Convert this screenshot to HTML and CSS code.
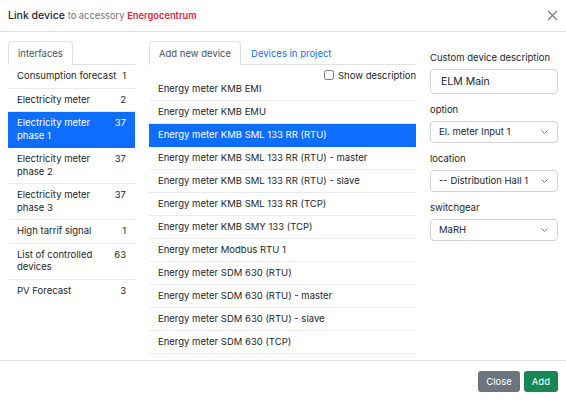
FILE: index.html
```html
<!DOCTYPE html>
<html lang="en">
  <head>
    <meta charset="UTF-8" />
    <meta name="viewport" content="width=device-width, initial-scale=1.0" />
    <title>Link device</title>
    <link rel="stylesheet" href="styles.css">
  </head>
  <body>
    <div class="modal">
      <div class="modal-header">
        <div class="modal-title">
          Link device
          <span class="sub">to accessory</span>
          <span class="accessory">Energocentrum</span>
        </div>
        <button type="button" class="btn-close" aria-label="Close">
          <svg width="11" height="11" viewBox="0 0 11 11">
            <path d="M1 1 L10 10 M10 1 L1 10" stroke="#6c757d" stroke-width="1.1" fill="none" />
          </svg>
        </button>
      </div>

      <div class="modal-body">
        <!-- interfaces -->
        <div class="col">
          <div class="nav-tabs">
            <span class="tab active">interfaces</span>
          </div>
          <ul class="list">
            <li><span>Consumption forecast</span><span class="count">1</span></li>
            <li><span>Electricity meter</span><span class="count">2</span></li>
            <li class="selected"><span>Electricity meter phase 1</span><span class="count">37</span></li>
            <li><span>Electricity meter phase 2</span><span class="count">37</span></li>
            <li><span>Electricity meter phase 3</span><span class="count">37</span></li>
            <li><span>High tarrif signal</span><span class="count">1</span></li>
            <li><span>List of controlled devices</span><span class="count">63</span></li>
            <li class="last"><span>PV Forecast</span><span class="count">3</span></li>
          </ul>
        </div>

        <!-- devices -->
        <div class="col">
          <div class="nav-tabs">
            <span class="tab active">Add new device</span>
            <span class="tab link">Devices in project</span>
          </div>
          <div class="list-options">
            <label class="check"><input type="checkbox" /> Show description</label>
          </div>
          <ul class="list devices">
            <li>Energy meter KMB EMI</li>
            <li>Energy meter KMB EMU</li>
            <li class="selected">Energy meter KMB SML 133 RR (RTU)</li>
            <li>Energy meter KMB SML 133 RR (RTU) - master</li>
            <li>Energy meter KMB SML 133 RR (RTU) - slave</li>
            <li>Energy meter KMB SML 133 RR (TCP)</li>
            <li>Energy meter KMB SMY 133 (TCP)</li>
            <li>Energy meter Modbus RTU 1</li>
            <li>Energy meter SDM 630 (RTU)</li>
            <li>Energy meter SDM 630 (RTU) - master</li>
            <li>Energy meter SDM 630 (RTU) - slave</li>
            <li>Energy meter SDM 630 (TCP)</li>
          </ul>
        </div>

        <!-- settings -->
        <div class="col settings">
          <div class="field">
            <label>Custom device description</label>
            <div class="input">ELM Main</div>
          </div>
          <div class="field">
            <label>option</label>
            <div class="select">El. meter Input 1 <svg width="7" height="4" viewBox="0 0 7 4"><path d="M0.5 0.5 L3.5 3.5 L6.5 0.5" stroke="#777" fill="none" /></svg></div>
          </div>
          <div class="field">
            <label>location</label>
            <div class="select">-- Distribution Hall 1 <svg width="7" height="4" viewBox="0 0 7 4"><path d="M0.5 0.5 L3.5 3.5 L6.5 0.5" stroke="#777" fill="none" /></svg></div>
          </div>
          <div class="field">
            <label>switchgear</label>
            <div class="select">MaRH <svg width="7" height="4" viewBox="0 0 7 4"><path d="M0.5 0.5 L3.5 3.5 L6.5 0.5" stroke="#777" fill="none" /></svg></div>
          </div>
        </div>
      </div>

      <div class="modal-footer">
        <button type="button" class="btn btn-secondary">Close</button>
        <button type="button" class="btn btn-success">Add</button>
      </div>
    </div>
  </body>
</html>
```

FILE: styles.css
```css
body {
  margin: 0;
  background: #fff;
  font-family: Inter, "Liberation Sans", sans-serif;
  font-size: 9.5px;
  color: #212529;
}
.modal {
  width: 566px;
  height: 400px;
}
.modal-header {
  height: 31px;
  border-bottom: 1px solid #dee2e6;
  display: flex;
  align-items: center;
  justify-content: space-between;
  padding: 0 8px;
}
.modal-title {
  font-size: 10.5px;
  font-weight: 500;
}
.modal-title .sub {
  font-size: 9.3px;
  font-weight: 400;
  color: #6c757d;
}
.modal-title .accessory {
  font-size: 9.3px;
  font-weight: 600;
  color: #ec1b3e;
}
.btn-close {
  border: none;
  background: none;
  padding: 0;
  width: 11px;
  height: 11px;
  display: flex;
}

.modal-body {
  display: grid;
  grid-template-columns: 127px 267px 128px;
  gap: 14px;
  padding: 9px 8px 8px;
  height: 311px;
  border-bottom: 1px solid #dee2e6;
}
.nav-tabs {
  display: flex;
  height: 23px;
  border-bottom: 1px solid #dee2e6;
}
.tab {
  display: flex;
  align-items: center;
  padding: 0 9px;
  border: 1px solid transparent;
  border-radius: 4px 4px 0 0;
  margin-bottom: -1px;
}
.tab.active {
  border-color: #dee2e6 #dee2e6 #fff;
  background: #fff;
  color: #495057;
}
.tab.link {
  color: #0d6efd;
}

.list {
  list-style: none;
  margin: 0;
  padding: 0;
}
.list li {
  display: flex;
  justify-content: space-between;
  gap: 4px;
  padding: 5px 9px;
  line-height: 12.5px;
  border-bottom: 1px solid #e9ecef;
}
.list li.last {
  border-bottom: none;
}
.list li.selected {
  background: #0d6efd;
  color: #fff;
  border-color: #0d6efd;
}
.list .count {
  flex: none;
}
.list-options {
  display: flex;
  justify-content: flex-end;
  align-items: center;
  height: 12px;
  margin: 4px 0 -3px;
  position: relative;
}
.check {
  display: flex;
  align-items: center;
  gap: 4px;
}
.check input {
  margin: 0;
  width: 10px;
  height: 10px;
}
.devices li {
  padding: 5px 9px;
  line-height: 12px;
}

.settings {
  padding-top: 10px;
}
.field {
  margin-bottom: 9.5px;
}
.field label {
  display: block;
  line-height: 13px;
  margin-bottom: 4.5px;
}
.input {
  height: 25px;
  box-sizing: border-box;
  border: 1px solid #ced4da;
  border-radius: 4px;
  padding: 0 10px;
  display: flex;
  align-items: center;
  font-size: 10.5px;
}
.select {
  height: 22px;
  box-sizing: border-box;
  border: 1px solid #ced4da;
  border-radius: 4px;
  padding: 0 9px 0 8px;
  display: flex;
  align-items: center;
  justify-content: space-between;
}

.modal-footer {
  display: flex;
  justify-content: flex-end;
  gap: 4px;
  padding: 10px 8px 0;
}
.btn {
  height: 21px;
  border: none;
  border-radius: 3px;
  padding: 0 8px;
  font-family: inherit;
  font-size: 9.5px;
  color: #fff;
}
.btn-secondary {
  background: #6c757d;
}
.btn-success {
  background: #198754;
}
```
